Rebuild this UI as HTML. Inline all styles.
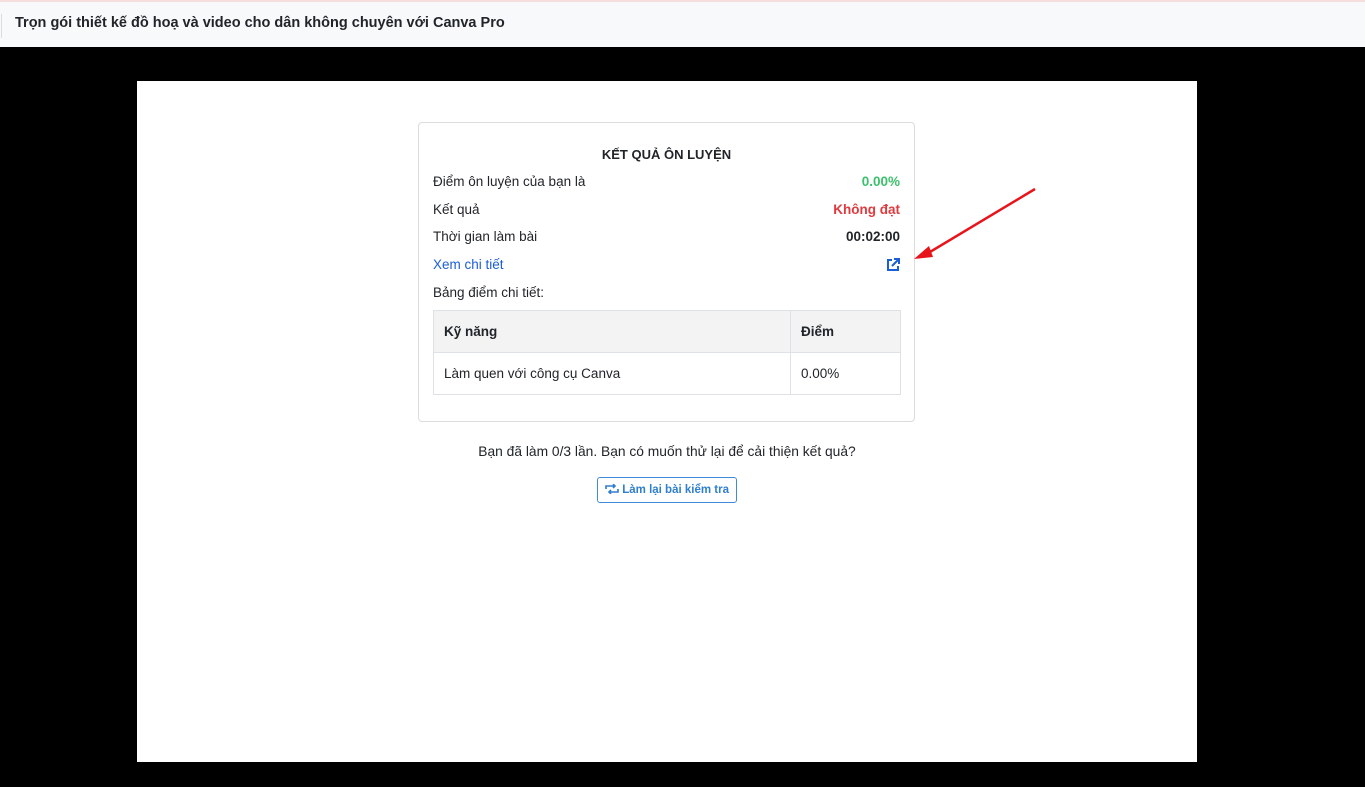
<!DOCTYPE html>
<html><head><meta charset="utf-8">
<style>
*{margin:0;padding:0;box-sizing:border-box}
body{width:1365px;height:787px;background:#000;font-family:"Liberation Sans",Arial,sans-serif;color:#212529;position:relative;overflow:hidden}
.top{position:absolute;left:0;top:0;width:1365px;height:47px;background:#f8f9fa;border-top:2px solid #f6dede}
.top .bar{position:absolute;left:1px;top:12px;width:1px;height:24px;background:#ddd}
.top h1{position:absolute;left:15px;top:13px;font-size:14.5px;font-weight:bold;color:#212529}
.panel{position:absolute;left:137px;top:81px;width:1060px;height:681px;background:#fff}
.card{position:absolute;left:418px;top:122px;width:497px;height:300px;border:1px solid #dcdcdc;border-radius:4px;background:#fff}
.title{position:absolute;left:0;width:100%;top:24px;text-align:center;font-weight:bold;font-size:13px}
.row{position:absolute;left:14px;right:14px;font-size:13.5px}
.row .r{position:absolute;right:0;top:0;font-weight:bold}
table{position:absolute;left:14px;top:187px;width:468px;border-collapse:collapse;font-size:13.5px}
td,th{border:1px solid #dee2e6;padding:0 10px;text-align:left}
th{background:#f3f3f3;height:42px;font-weight:bold}
td{height:42px}
.q{position:absolute;left:137px;width:1060px;top:444px;text-align:center;font-size:13.8px}
.btn{position:absolute;left:597px;top:477px;width:140px;height:26px;border:1px solid #3d8bd9;border-radius:3px;color:#2f7fcf;font-size:11.5px;font-weight:bold;line-height:24px;text-align:center}
</style></head><body>
<div class="top"><div class="bar"></div><h1>Trọn gói thiết kế đồ hoạ và video cho dân không chuyên với Canva Pro</h1></div>
<div class="panel"></div>
<div class="card">
<div class="title">KẾT QUẢ ÔN LUYỆN</div>
<div class="row" style="top:51px">Điểm ôn luyện của bạn là<span class="r" style="color:#3cc06b">0.00%</span></div>
<div class="row" style="top:79px">Kết quả<span class="r" style="color:#e0393e">Không đạt</span></div>
<div class="row" style="top:106px">Thời gian làm bài<span class="r">00:02:00</span></div>
<div class="row" style="top:134px;color:#1a5fd6">Xem chi tiết<span class="r" style="top:1px"><svg width="14" height="14" viewBox="0 0 14 14" fill="none" stroke="#1a5fd6" stroke-width="2"><path d="M6 2H2v10h10V8"/><path d="M8 1h5v5M13 1L6 8"/></svg></span></div>
<div class="row" style="top:162px">Bảng điểm chi tiết:</div>
<table><tr><th style="width:357px">Kỹ năng</th><th>Điểm</th></tr><tr><td>Làm quen với công cụ Canva</td><td>0.00%</td></tr></table>
</div>
<svg style="position:absolute;left:0;top:0" width="1365" height="787"><line x1="1035" y1="189" x2="925" y2="255" stroke="#e8141b" stroke-width="2.5"/><path d="M914 259L929 246L933 257Z" fill="#e8141b"/></svg>
<div class="q">Bạn đã làm 0/3 lần. Bạn có muốn thử lại để cải thiện kết quả?</div>
<div class="btn"><svg width="14" height="10" viewBox="0 0 14 10" fill="none" stroke="#2f7fcf" stroke-width="1.6" style="vertical-align:-1px"><path d="M1 5V2h9M8 0l2 2-2 2M13 5v3H4M6 6L4 8l2 2"/></svg> Làm lại bài kiểm tra</div>
</body></html>
